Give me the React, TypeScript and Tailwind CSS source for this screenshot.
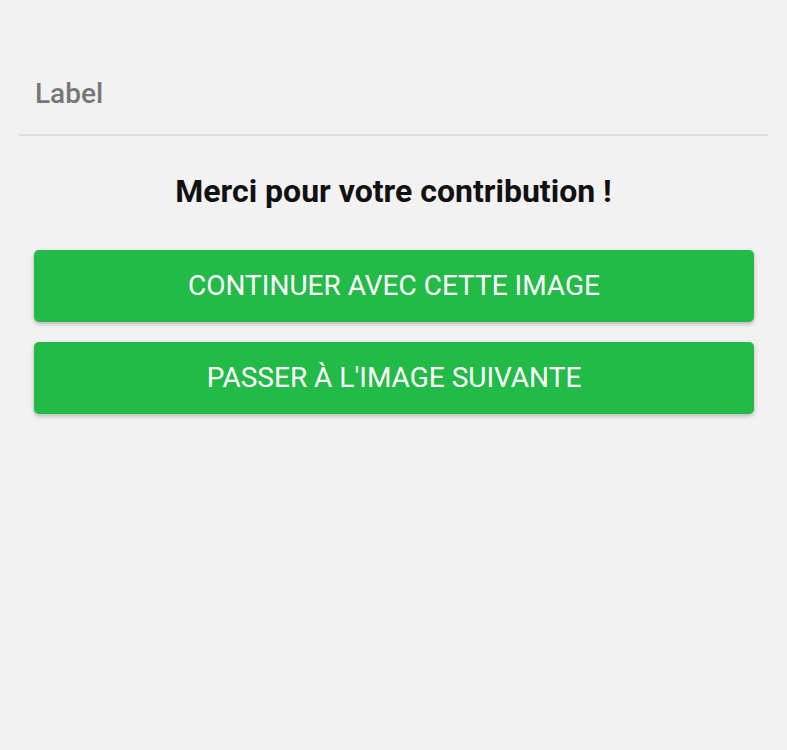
import React from "react";

export default function App() {
  return (
    <div
      className="min-h-screen w-full bg-[#f2f2f2]"
      style={{ fontFamily: "Roboto, 'Noto Sans', sans-serif" }}
    >
      <div className="pt-[78px]">
        <div className="mx-[19px] border-b-2 border-[#dedede] pb-[24px] pl-[16px]">
          <div className="text-[28px] leading-[32px] font-medium text-[#777777]">Label</div>
        </div>
        <h1 className="mt-[37px] text-center text-[32px] leading-[36px] font-bold text-[#111111]">
          Merci pour votre contribution !
        </h1>
        <div className="mt-[41px] ml-[34px] mr-[33px] flex flex-col gap-[20px]">
          <button className="flex h-[72px] w-full items-center justify-center rounded-[5px] bg-[#22bb47] text-[28px] font-normal uppercase text-white shadow-[0_2px_4px_rgba(0,0,0,0.25)]">
            Continuer avec cette image
          </button>
          <button className="flex h-[72px] w-full items-center justify-center rounded-[5px] bg-[#22bb47] text-[28px] font-normal uppercase text-white shadow-[0_2px_4px_rgba(0,0,0,0.25)]">
            Passer à l'image suivante
          </button>
        </div>
      </div>
    </div>
  );
}
